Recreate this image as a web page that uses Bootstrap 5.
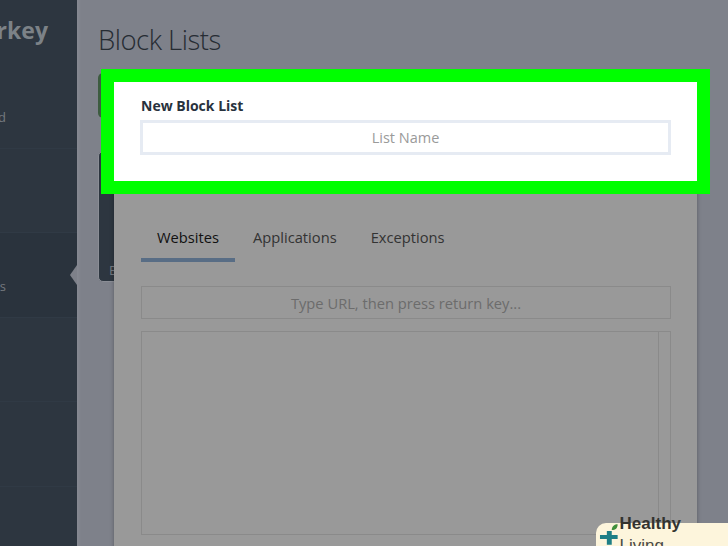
<!DOCTYPE html>
<html lang="en">
<head>
    <meta charset="UTF-8">
    <meta name="viewport" content="width=device-width, initial-scale=1.0">
    <title>Block Lists</title>
    <link href="https://cdn.jsdelivr.net/npm/bootstrap@5.3.0/dist/css/bootstrap.min.css" rel="stylesheet">
    <style>
        html, body { height: 100%; overflow: hidden; }
        body { font-family: "Open Sans", sans-serif; background: #7e818a; }
        .page-wrap { height: 546px; overflow: hidden; }

        .side-bar { width: 77px; flex: none; background: #2d3640; overflow: hidden; }
        .side-brand { height: 64px; padding: 15px 29px 0 0; font-size: 23px; font-weight: 700; line-height: 30px; color: #7c8287; }
        .side-item { height: 84.5px; padding: 44px 71px 0 0; font-size: 13px; line-height: 18px; color: #74797f; border-bottom: 1px solid #303a45; position: relative; }
        .side-brand, .side-item { display: flex; justify-content: flex-end; white-space: nowrap; }
        .side-item.is-active { background: #2a333d; }
        .side-item.is-active::after { content: ""; position: absolute; right: 0; top: 32px; border: 10px solid transparent; border-left: 0; border-right: 7px solid #7e818a; }

        .main-area { padding: 0 0 0 21px; background: linear-gradient(90deg, #868992 0, #7e818a 4px); }
        .page-title { font-size: 27.5px; font-weight: 300; line-height: 38px; margin: 21px 0 14px; letter-spacing: -.5px; color: #262c33; }
        .green-tile { width: 60px; height: 45px; border-radius: 5px; background: #3d5c40; margin-bottom: 33px; }
        .dark-tile { width: 60px; height: 131px; border-radius: 5px; background: #2d3640; border: 1px solid #8b8e96; padding: 109px 0 0 10px; font-size: 13px; color: #74797f; line-height: 18px; }

        .dialog-box { position: absolute; left: 114px; top: 82px; width: 583px; height: 480px; background: #999; box-shadow: 0 0 4px rgba(0,0,0,.3); }
        .name-section { height: 99px; background: #fff; outline: 13px solid #00ff00; padding: 14px 26px 0 26px; position: relative; }
        .name-label { font-size: 14px; font-weight: 700; line-height: 19px; color: #28323d; margin: 0 0 5px 1px; }
        .name-input.form-control { height: 35px; border: 3px solid #e6ebf3; border-radius: 0; text-align: center; font-size: 14.5px; padding: 0; box-shadow: none; }
        .name-input::placeholder { color: #9a9a9a; opacity: 1; }

        .tab-row { margin: 36px 0 0 27px; border: 0; }
        .tab-link { height: 45px; padding: 0 16px; margin-right: 2px; font-size: 14.7px; line-height: 40px; color: #333; }
        .tab-link.is-current { color: #111; border-bottom: 4px solid #586d85; }
        .dialog-body { padding: 24px 26px 0 27px; }
        .url-input.form-control { height: 33px; background: transparent; border: 1px solid #8a8a8a; border-radius: 0; text-align: center; font-size: 14.7px; padding: 0; box-shadow: none; }
        .url-input::placeholder { color: #6c6c6c; opacity: 1; }
        .list-area { height: 204px; margin-top: 12px; border: 1px solid #8a8a8a; }
        .list-scroll { width: 12px; border-left: 1px solid #8a8a8a; }

        .brand-tag { position: absolute; right: 0; bottom: 0; width: 132px; height: 23px; padding-left: 3px; background: #fdf5dc; border-top-left-radius: 10px; font-family: "Liberation Sans", sans-serif; font-size: 17px; line-height: 22px; color: #4a4a46; }
        .brand-tag b { color: #33332f; }
    </style>
</head>
<body>
    <div class="page-wrap d-flex">
        <!-- Sidebar -->
        <div class="side-bar">
            <div class="side-brand">Cold Turkey</div>
            <div class="side-item">Dashboard</div>
            <div class="side-item"></div>
            <div class="side-item is-active">Block Lists</div>
            <div class="side-item"></div>
            <div class="side-item"></div>
            <div class="side-item"></div>
        </div>

        <!-- Main -->
        <div class="main-area flex-grow-1">
            <h1 class="page-title">Block Lists</h1>
            <div class="green-tile"></div>
            <div class="dark-tile">B</div>
        </div>
    </div>

    <!-- New block list dialog -->
    <div class="dialog-box">
        <div class="name-section">
            <p class="name-label">New Block List</p>
            <input type="text" class="form-control name-input" placeholder="List Name">
        </div>
        <div class="nav tab-row">
            <div class="tab-link is-current">Websites</div>
            <div class="tab-link">Applications</div>
            <div class="tab-link">Exceptions</div>
        </div>
        <div class="dialog-body">
            <input type="text" class="form-control url-input" placeholder="Type URL, then press return key...">
            <div class="list-area d-flex justify-content-end">
                <div class="list-scroll"></div>
            </div>
        </div>
    </div>

    <div class="brand-tag d-flex align-items-center">
        <svg width="21" height="23" viewBox="0 0 21 23" class="flex-none">
            <path d="M8 8h5v4h6v4h-6v6H8v-6H1v-4h7z" fill="#1f7f86"/>
            <path d="M13 7c0-4 3-6 6-6 0 4-2 6-6 6z" fill="#3f8f3a"/>
        </svg>
        <span><b>Healthy</b> Living</span>
    </div>
</body>
</html>
